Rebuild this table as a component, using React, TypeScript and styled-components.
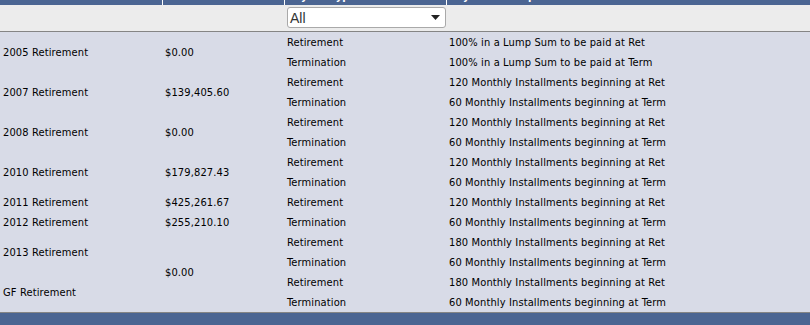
import styled, { createGlobalStyle } from 'styled-components';

const GlobalStyle = createGlobalStyle`
  html, body {
    margin: 0;
    padding: 0;
    background: #d8dbe7;
  }
`;

const Page = styled.div`
  width: 810px;
  height: 325px;
  overflow: hidden;
  background: #d8dbe7;
  font-family: 'DejaVu Sans Condensed', 'DejaVu Sans', sans-serif;
  font-size: 11px;
  letter-spacing: 0.13px;
  color: #000;
`;

const Grid = styled.table`
  width: 810px;
  border-collapse: collapse;
  table-layout: fixed;
`;

const HeadCell = styled.th`
  background: #4b6592;
  padding: 0;
  height: 5px;
  border-right: 1px solid #fff;
  text-align: left;
  vertical-align: top;

  &:last-child {
    border-right: none;
  }
`;

const HeadClip = styled.div`
  height: 5px;
  overflow: hidden;
`;

const HeadLabel = styled.div`
  margin-top: -10px;
  padding-left: 3px;
  line-height: 14px;
  font-weight: bold;
  color: #fff;
  white-space: nowrap;
`;

const FilterRow = styled.tr`
  background: #ececec;
  border-bottom: 1px solid #858585;
`;

const FilterCell = styled.td`
  height: 26px;
  padding: 0 0 0 3px;
  vertical-align: middle;
`;

const SelectBox = styled.div`
  box-sizing: border-box;
  width: 159px;
  height: 21px;
  margin-top: -1px;
  display: flex;
  align-items: center;
  justify-content: space-between;
  padding: 0 5px 0 2px;
  background: #fff;
  border: 1px solid #a9a9a9;
  border-radius: 3px;
  font-family: 'Liberation Sans', Arial, sans-serif;
  font-size: 14px;
  letter-spacing: 0;
  color: #333;
`;

const Cell = styled.td`
  height: 20px;
  padding: 0 0 0 3px;
  vertical-align: middle;
  white-space: nowrap;
  overflow: hidden;
`;

const FooterBar = styled.div`
  height: 12px;
  border-top: 1px solid #858585;
  background: #4b6592;
`;

type Span = [string, number];

interface Row {
  plan?: Span;
  balance?: Span;
  type: string;
  desc: string;
}

const RET_LUMP = '100% in a Lump Sum to be paid at Ret';
const TERM_LUMP = '100% in a Lump Sum to be paid at Term';
const RET_120 = '120 Monthly Installments beginning at Ret';
const RET_180 = '180 Monthly Installments beginning at Ret';
const TERM_60 = '60 Monthly Installments beginning at Term';

const rows: Row[] = [
  { plan: ['2005 Retirement', 2], balance: ['$0.00', 2], type: 'Retirement', desc: RET_LUMP },
  { type: 'Termination', desc: TERM_LUMP },
  { plan: ['2007 Retirement', 2], balance: ['$139,405.60', 2], type: 'Retirement', desc: RET_120 },
  { type: 'Termination', desc: TERM_60 },
  { plan: ['2008 Retirement', 2], balance: ['$0.00', 2], type: 'Retirement', desc: RET_120 },
  { type: 'Termination', desc: TERM_60 },
  { plan: ['2010 Retirement', 2], balance: ['$179,827.43', 2], type: 'Retirement', desc: RET_120 },
  { type: 'Termination', desc: TERM_60 },
  { plan: ['2011 Retirement', 1], balance: ['$425,261.67', 1], type: 'Retirement', desc: RET_120 },
  { plan: ['2012 Retirement', 1], balance: ['$255,210.10', 1], type: 'Termination', desc: TERM_60 },
  { plan: ['2013 Retirement', 2], balance: ['$0.00', 4], type: 'Retirement', desc: RET_180 },
  { type: 'Termination', desc: TERM_60 },
  { plan: ['GF Retirement', 2], type: 'Retirement', desc: RET_180 },
  { type: 'Termination', desc: TERM_60 },
];

const headers = ['Plan', 'Balance', 'Payout Type', 'Payout Description'];

export default function App() {
  return (
    <Page>
      <GlobalStyle />
      <Grid>
        <colgroup>
          <col style={{ width: 162 }} />
          <col style={{ width: 122 }} />
          <col style={{ width: 162 }} />
          <col style={{ width: 364 }} />
        </colgroup>
        <thead>
          <tr>
            {headers.map((h) => (
              <HeadCell key={h}>
                <HeadClip>
                  <HeadLabel>{h}</HeadLabel>
                </HeadClip>
              </HeadCell>
            ))}
          </tr>
          <FilterRow>
            <FilterCell />
            <FilterCell />
            <FilterCell>
              <SelectBox>
                <span>All</span>
                <svg width="9" height="5" viewBox="0 0 9 5">
                  <path d="M0 0h9L4.5 5z" fill="#222" />
                </svg>
              </SelectBox>
            </FilterCell>
            <FilterCell />
          </FilterRow>
        </thead>
        <tbody>
          {rows.map((r, i) => (
            <tr key={i}>
              {r.plan && <Cell rowSpan={r.plan[1]}>{r.plan[0]}</Cell>}
              {r.balance && <Cell rowSpan={r.balance[1]}>{r.balance[0]}</Cell>}
              <Cell>{r.type}</Cell>
              <Cell>{r.desc}</Cell>
            </tr>
          ))}
        </tbody>
      </Grid>
      <FooterBar />
    </Page>
  );
}
